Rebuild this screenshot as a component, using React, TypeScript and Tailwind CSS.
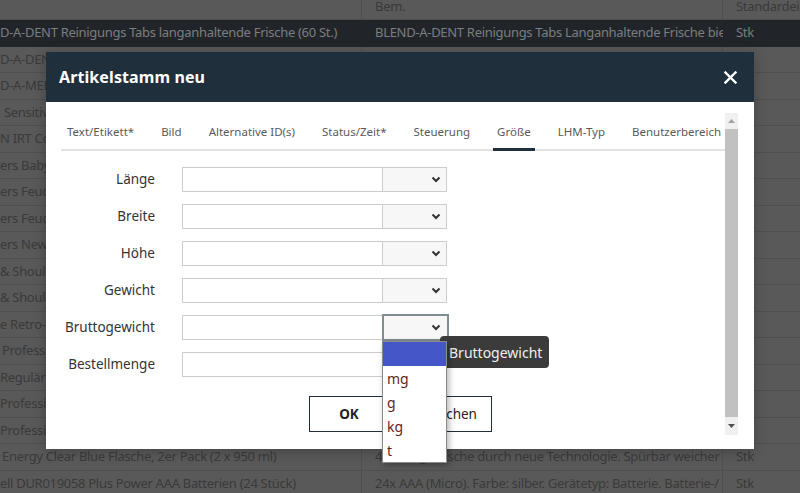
import React from "react";

const rows: [string, string, string, string][] = [
  ["D-A-DENT Reinigungs Tabs langanhaltende Frische (60 St.)", "BLEND-A-DENT Reinigungs Tabs Langanhaltende Frische biel", "Stk", "pl-0"],
  ["D-A-DENT Reinigungs Tabs extra frisch (60 St.)", "", "", "pl-0"],
  ["D-A-MED Haftcreme Extra Stark", "", "", "pl-0"],
  ["Sensitive Zahncreme", "", "", "pl-[4px]"],
  ["N IRT Comfort", "", "", "pl-0"],
  ["ers Baby Dry", "", "", "pl-0"],
  ["ers Feuchttücher", "", "", "pl-0"],
  ["ers Feuchttücher", "", "", "pl-0"],
  ["ers New Baby", "", "", "pl-0"],
  ["& Shoulders Classic", "", "", "pl-0"],
  ["& Shoulders Men", "", "", "pl-0"],
  ["e Retro-Edition", "", "", "pl-0"],
  ["Professional", "", "", "pl-[2px]"],
  ["Regulär Clean", "", "", "pl-0"],
  ["Professional", "", "", "pl-0"],
  ["Professional", "", "", "pl-0"],
  ["Energy Clear Blue Flasche, 2er Pack (2 x 950 ml)", "4x 1,5 kg, Frische durch neue Technologie. Spürbar weicher", "Stk", "pl-[2px]"],
  ["ell DUR019058 Plus Power AAA Batterien (24 Stück)", "24x AAA (Micro). Farbe: silber. Gerätetyp: Batterie. Batterie-/", "Stk", "pl-0"],
];

const fields = ["Länge", "Breite", "Höhe", "Gewicht", "Bruttogewicht"];
const tabs = ["Text/Etikett*", "Bild", "Alternative ID(s)", "Status/Zeit*", "Steuerung", "Größe", "LHM-Typ", "Benutzerbereich"];

function Chevron() {
  return (
    <svg width="10" height="7" viewBox="0 0 10 7" className="ml-auto">
      <path d="M1.5 1.5 L5 5 L8.5 1.5" fill="none" stroke="#333" strokeWidth="2" />
    </svg>
  );
}

export default function App() {
  return (
    <div
      className="relative w-[800px] h-[493px] overflow-hidden bg-[#595959] text-[#3a3a3a]"
      style={{ fontFamily: '"Noto Sans", "Open Sans", sans-serif' }}
    >
      {/* table behind the dialog */}
      <div className="mt-[-7px] text-[13px] tracking-[-0.3px]">
        <div className="flex h-[27px] items-center border-b border-[#4f4f4f]">
          <div className="w-[362px] shrink-0 h-full border-r border-[#4f4f4f]"></div>
          <div className="w-[361px] shrink-0 h-full border-r border-[#4f4f4f] pl-[13px] pt-[4px]">Bem.</div>
          <div className="flex-1 min-w-0 h-full pl-[13px] pt-[4px] whitespace-nowrap overflow-hidden">Standardeinheit</div>
        </div>
        {rows.map((r, i) => (
          <div
            key={i}
            className={`flex h-[26.5px] items-center border-b whitespace-nowrap overflow-hidden ${
              i === 0 ? "bg-[#212529] text-[#7b7e80] border-[#212529]" : "border-[#4f4f4f]"
            }`}
          >
            <div className={`w-[362px] shrink-0 h-full flex items-center overflow-hidden ${r[3]} ${i === 0 ? "" : "border-r border-[#4f4f4f]"}`}>
              {r[0]}
            </div>
            <div className={`w-[361px] shrink-0 h-full flex items-center overflow-hidden pl-[13px] ${i === 0 ? "" : "border-r border-[#4f4f4f]"}`}>
              {r[1]}
            </div>
            <div className="flex-1 min-w-0 h-full flex items-center pl-[13px]">{r[2]}</div>
          </div>
        ))}
      </div>

      {/* dialog */}
      <div className="absolute left-[46px] top-[52px] w-[708px] h-[397px] bg-white flex flex-col shadow-[0_2px_12px_rgba(0,0,0,0.25)]">
        <div className="h-[50px] bg-[#1f2f3b] flex items-center justify-between pl-[13px] pr-[17px]">
          <span className="text-white font-bold text-[16px] tracking-[0.1px]">Artikelstamm neu</span>
          <svg width="13" height="13" viewBox="0 0 13 13">
            <path d="M1.5 1.5 L11.5 11.5 M11.5 1.5 L1.5 11.5" stroke="white" strokeWidth="2.4" strokeLinecap="square" />
          </svg>
        </div>
        <div className="flex flex-1 pl-[15px] pr-[16px] pt-[11px] pb-[14px]">
          <div className="flex-1 flex flex-col">
            <div className="flex h-[38px] border-b-2 border-[#e2e2e2] pl-[2px] gap-[19px] text-[11.5px] text-[#5a5a5a]">
              {tabs.map((t) => (
                <div
                  key={t}
                  className={`px-[4px] flex items-center h-[38px] whitespace-nowrap ${
                    t === "Größe" ? "border-b-[3px] border-[#1f2f3b] pt-[3px]" : ""
                  }`}
                >
                  {t}
                </div>
              ))}
            </div>
            <div className="flex flex-col gap-[12px] mt-[16px] text-[13.5px] text-[#333]">
              {fields.map((f) => (
                <div key={f} className="flex items-center h-[25px]">
                  <div className="w-[94px] text-right whitespace-nowrap">{f}</div>
                  <div className="w-[201px] h-[25px] ml-[27px] border border-[#cccccc] bg-white"></div>
                  {f === "Bruttogewicht" ? (
                    <div className="w-[67px] h-[27px] -ml-px border-2 border-[#828d93] bg-[#f7f7f7] flex items-center pr-[6px]">
                      <Chevron />
                    </div>
                  ) : (
                    <div className="w-[64px] h-[25px] border border-l-0 border-[#cccccc] bg-[#f7f7f7] flex items-center pr-[5px]">
                      <Chevron />
                    </div>
                  )}
                </div>
              ))}
              <div className="flex items-center h-[25px]">
                <div className="w-[94px] text-right whitespace-nowrap">Bestellmenge</div>
                <div className="w-[265px] h-[25px] ml-[27px] border border-[#cccccc] bg-white"></div>
              </div>
            </div>
            <div className="flex gap-[4px] mt-[19px] ml-[248px] text-[13.5px]">
              <button className="w-[80px] h-[36px] border border-[#1f2f3b] font-bold text-[#222]">OK</button>
              <button className="w-[99px] h-[36px] border border-[#1f2f3b] text-[#222]">Abbrechen</button>
            </div>
          </div>
          <div className="w-[16px] bg-[#f0f0f0] flex flex-col items-center">
            <svg width="9" height="16" viewBox="0 0 9 16">
              <path d="M1 10 L4.5 6 L8 10 Z" fill="#a3a3a3" />
            </svg>
            <div className="w-[13px] flex-1 bg-[#c1c1c1]"></div>
            <svg width="9" height="18" viewBox="0 0 9 18">
              <path d="M1 7 L4.5 11 L8 7 Z" fill="#505050" />
            </svg>
          </div>
        </div>
      </div>

      {/* tooltip */}
      <div className="absolute left-[440px] top-[336px] w-[109px] h-[32px] rounded-[4px] bg-[#3b3b3b] text-[#f0f0f0] text-[14px] flex items-center pl-[9px]">
        Bruttogewicht
      </div>

      {/* open select list */}
      <div className="absolute left-[382px] top-[341px] w-[65px] bg-white border border-[#8a8a8a] shadow-[2px_2px_6px_rgba(0,0,0,0.3)] text-[14px] text-[#5e1f1f]">
        <div className="h-[24px] bg-[#4557c8]"></div>
        {["mg", "g", "kg", "t"].map((o) => (
          <div key={o} className="h-[24px] flex items-center pl-[4px]">
            {o}
          </div>
        ))}
      </div>
    </div>
  );
}
